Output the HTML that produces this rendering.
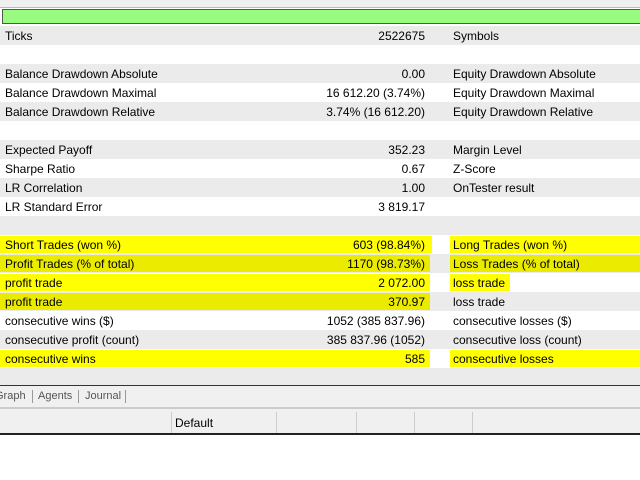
<!DOCTYPE html>
<html><head><style>
body{margin:0;width:640px;height:480px;overflow:hidden;background:#fff;font-family:"Liberation Sans",sans-serif;font-size:12px;color:#000;position:relative}
.r{position:absolute;left:0;width:640px;height:19px;line-height:21px}
.g{background:#ebebeb}
.r span{position:absolute}
.l{left:5px}.v{right:215px}.l2{left:453px}
.y1{position:absolute;top:1px;height:17px;background:#ffff00}
.g .y1{background:#ebeb00}
.t span{position:absolute}
.s{width:1px;height:13px;top:4px;background:#999}
</style></head><body>
<div style="position:absolute;top:0;left:0;width:640px;height:7px;background:#f0f0f0;border-bottom:1px solid #bbb"></div>
<div style="position:absolute;top:9px;left:2px;width:640px;height:13px;background:#98fb80;border:1px solid #555"></div>
<div class="r g" style="top:26px"><span class="l">Ticks</span><span class="v">2522675</span><span class="l2">Symbols</span></div>
<div class="r g" style="top:64px"><span class="l">Balance Drawdown Absolute</span><span class="v">0.00</span><span class="l2">Equity Drawdown Absolute</span></div>
<div class="r" style="top:83px"><span class="l">Balance Drawdown Maximal</span><span class="v">16 612.20 (3.74%)</span><span class="l2">Equity Drawdown Maximal</span></div>
<div class="r g" style="top:102px"><span class="l">Balance Drawdown Relative</span><span class="v">3.74% (16 612.20)</span><span class="l2">Equity Drawdown Relative</span></div>
<div class="r g" style="top:140px"><span class="l">Expected Payoff</span><span class="v">352.23</span><span class="l2">Margin Level</span></div>
<div class="r" style="top:159px"><span class="l">Sharpe Ratio</span><span class="v">0.67</span><span class="l2">Z-Score</span></div>
<div class="r g" style="top:178px"><span class="l">LR Correlation</span><span class="v">1.00</span><span class="l2">OnTester result</span></div>
<div class="r" style="top:197px"><span class="l">LR Standard Error</span><span class="v">3 819.17</span></div>
<div class="r g" style="top:216px"></div>
<div class="r" style="top:235px"><div class="y1" style="left:0;width:432px"></div><div class="y1" style="left:450px;width:190px"></div><span class="l">Short Trades (won %)</span><span class="v">603 (98.84%)</span><span class="l2">Long Trades (won %)</span></div>
<div class="r g" style="top:254px"><div class="y1" style="left:0;width:430px"></div><div class="y1" style="left:450px;width:190px"></div><span class="l">Profit Trades (% of total)</span><span class="v">1170 (98.73%)</span><span class="l2">Loss Trades (% of total)</span></div>
<div class="r" style="top:273px"><div class="y1" style="left:0;width:430px"></div><div class="y1" style="left:450px;width:60px"></div><span class="l">profit trade</span><span class="v">2 072.00</span><span class="l2">loss trade</span></div>
<div class="r g" style="top:292px"><div class="y1" style="left:0;width:430px"></div><span class="l">profit trade</span><span class="v">370.97</span><span class="l2">loss trade</span></div>
<div class="r" style="top:311px"><span class="l">consecutive wins ($)</span><span class="v">1052 (385 837.96)</span><span class="l2">consecutive losses ($)</span></div>
<div class="r g" style="top:330px"><span class="l">consecutive profit (count)</span><span class="v">385 837.96 (1052)</span><span class="l2">consecutive loss (count)</span></div>
<div class="r" style="top:349px"><div class="y1" style="left:0;width:430px"></div><div class="y1" style="left:450px;width:190px"></div><span class="l">consecutive wins</span><span class="v">585</span><span class="l2">consecutive losses</span></div>
<div class="r g" style="top:368px;height:17px"></div>
<div class="t" style="position:absolute;top:385px;left:0;width:640px;height:22px;background:#f0f0f0;border-top:1px solid #333;color:#555;line-height:20px;font-size:11px">
<span style="left:-5px">Graph</span><span class="s" style="left:32px"></span><span style="left:38px">Agents</span><span class="s" style="left:78px"></span><span style="left:85px">Journal</span><span class="s" style="left:125px"></span></div>
<div style="position:absolute;top:407px;left:0;width:640px;height:2px;background:#ccc"></div>
<div style="position:absolute;top:409px;left:0;width:640px;height:24px;background:#f0f0f0;border-bottom:2px solid #222;line-height:28px">
<div style="position:absolute;left:171px;top:3px;width:1px;height:21px;background:#ccc"></div>
<span style="position:absolute;left:175px">Default</span>
<div style="position:absolute;left:276px;top:3px;width:1px;height:21px;background:#ccc"></div>
<div style="position:absolute;left:356px;top:3px;width:1px;height:21px;background:#ccc"></div>
<div style="position:absolute;left:414px;top:3px;width:1px;height:21px;background:#ccc"></div>
<div style="position:absolute;left:472px;top:3px;width:1px;height:21px;background:#ccc"></div>
</div>
</body></html>
